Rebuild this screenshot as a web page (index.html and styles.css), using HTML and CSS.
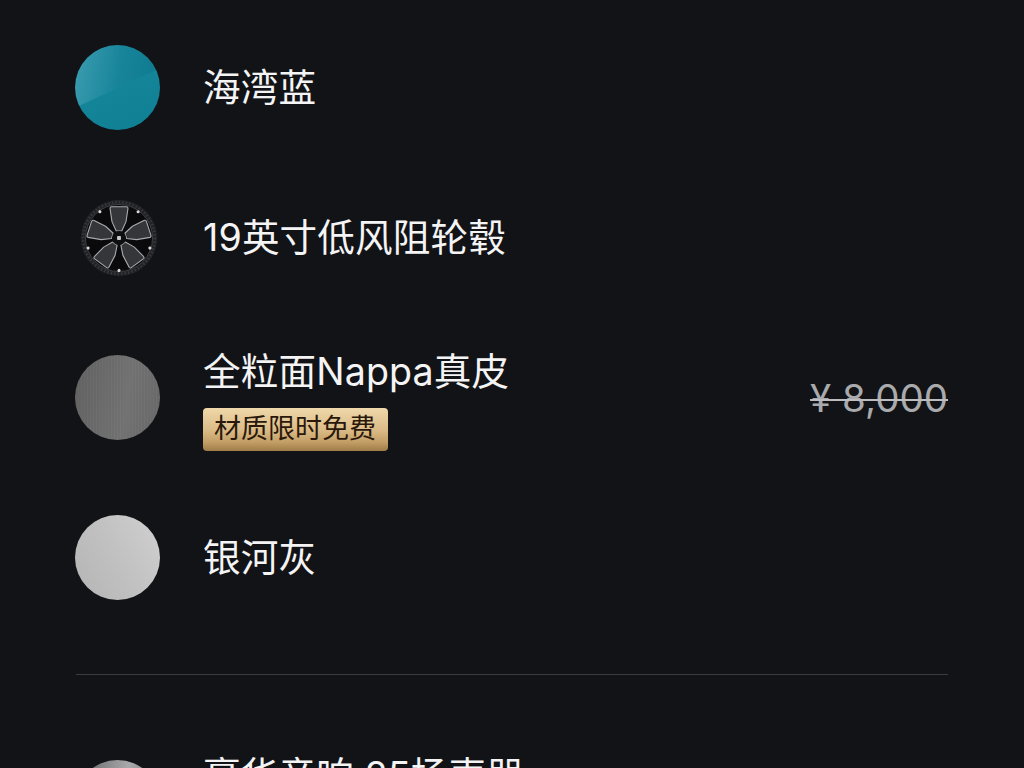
FILE: index.html
```html
<!DOCTYPE html>
<html lang="zh-CN">
<head>
<meta charset="utf-8">
<title>配置清单</title>
<link rel="stylesheet" href="styles.css">
</head>
<body>
<main class="page">
  <section class="list">
    <div class="row row-paint">
      <div class="swatch swatch-blue"></div>
      <div class="info"><div class="name">海湾蓝</div></div>
    </div>
    <div class="row">
      <div class="swatch swatch-wheel">
        <svg class="wheel" viewBox="0 0 100 100" aria-hidden="true">
          <circle cx="50" cy="50" r="49" fill="#202125"/>
          <circle cx="50" cy="50" r="46" fill="none" stroke="#36373b" stroke-width="3.5" stroke-dasharray="2 2.5"/>
          <circle cx="50" cy="50" r="43" fill="#0a0a0c" stroke="#4a4b4f" stroke-width="1"/>
          <defs>
            <path id="spoke" d="M40.5 10 L59.5 10 Q61.5 10 61.5 12 L59 29 L53.5 41 L46.5 41 L41 29 L38.5 12 Q38.5 10 40.5 10 Z" fill="#35363a" stroke="#a9aaad" stroke-width="1.4" stroke-linejoin="round"/>
            <circle id="nut" cx="74.5" cy="16.3" r="2" fill="#d8d8da"/>
          </defs>
          <use href="#spoke"/>
          <use href="#spoke" transform="rotate(72 50 50)"/>
          <use href="#spoke" transform="rotate(144 50 50)"/>
          <use href="#spoke" transform="rotate(216 50 50)"/>
          <use href="#spoke" transform="rotate(288 50 50)"/>
          <use href="#nut"/>
          <use href="#nut" transform="rotate(72 50 50)"/>
          <use href="#nut" transform="rotate(144 50 50)"/>
          <use href="#nut" transform="rotate(216 50 50)"/>
          <use href="#nut" transform="rotate(288 50 50)"/>
          <circle cx="50" cy="50" r="9" fill="#0e0f11"/>
          <rect x="47.5" y="47.5" width="5" height="5" rx="1" fill="#c8c8ca"/>
        </svg>
      </div>
      <div class="info"><div class="name">19英寸低风阻轮毂</div></div>
    </div>
    <div class="row">
      <div class="swatch swatch-nappa"></div>
      <div class="info info-stacked">
        <div class="name">全粒面Nappa真皮</div>
        <div class="badge">材质限时免费</div>
      </div>
      <div class="price">¥ 8,000</div>
    </div>
    <div class="row">
      <div class="swatch swatch-silver"></div>
      <div class="info"><div class="name">银河灰</div></div>
    </div>
  </section>
  <hr class="divider">
  <section class="list">
    <div class="row">
      <div class="swatch swatch-audio"></div>
      <div class="info info-top"><div class="name">豪华音响 25扬声器</div></div>
    </div>
  </section>
</main>
</body>
</html>
```
FILE: styles.css
```css
* { box-sizing: border-box; }
html, body { margin: 0; height: 100%; overflow: hidden; background: #121317; }
body { font-family: Inter, "Noto Sans CJK SC", sans-serif; color: #f4f4f5; }
.page { padding: 45px 76px 0 75px; }
.list { display: flex; flex-direction: column; gap: 75px; }
.row { display: flex; align-items: center; height: 85px; }
.row-paint { margin-bottom: -10px; }
.swatch { flex: none; width: 85px; height: 85px; border-radius: 50%; }
.swatch-blue {
  background:
    linear-gradient(155deg, rgba(18,131,150,0) 0 50%, #148599 50.8%, #0f7f93 100%),
    linear-gradient(100deg, #3d9db0 0%, #17849a 50%, #0d788c 100%);
}
.swatch-wheel { display: flex; align-items: center; justify-content: center; padding-left: 3px; background: none; }
.wheel { width: 78px; height: 78px; display: block; filter: blur(.35px); }
.swatch-nappa {
  background:
    repeating-linear-gradient(90deg, rgba(255,255,255,.018) 0 1px, rgba(0,0,0,.018) 1px 3px),
    linear-gradient(100deg, #626262, #737373 60%, #696969);
}
.swatch-silver { background: linear-gradient(60deg, #b4b4b4 0%, #c1c1c1 50%, #d0d0d0 100%); }
.swatch-audio { background: linear-gradient(100deg, #5c5c5e, #a9a9ab 55%, #6d6d6f); }
.info { margin-left: 44px; min-width: 0; }
.info-stacked { padding-top: 6px; }
.info-top { align-self: flex-start; margin-top: -6px; }
.name { margin-left: -1px; font-size: 37.6px; letter-spacing: .15px; line-height: 44px; white-space: nowrap; }
.badge {
  display: block;
  width: 185px;
  margin-top: 14px;
  margin-left: -1px;
  padding-left: 11px;
  height: 43px;
  line-height: 42px;
  font-size: 27px;
  white-space: nowrap;
  color: #2a180b;
  border-radius: 4px;
  background: linear-gradient(180deg, #efd8aa 0%, #dcbc88 50%, #c29e66 80%, #9e7c48 100%);
}
.price {
  margin-left: auto;
  font-size: 38.5px;
  line-height: 44px;
  color: #a9aaac;
  text-decoration: line-through;
  text-decoration-thickness: 2px;
  text-decoration-color: #bdbdbf;
  white-space: nowrap;
}
.divider { height: 1px; margin: 74px 0 85px 1px; border: 0; background: #3a3b40; }
```
